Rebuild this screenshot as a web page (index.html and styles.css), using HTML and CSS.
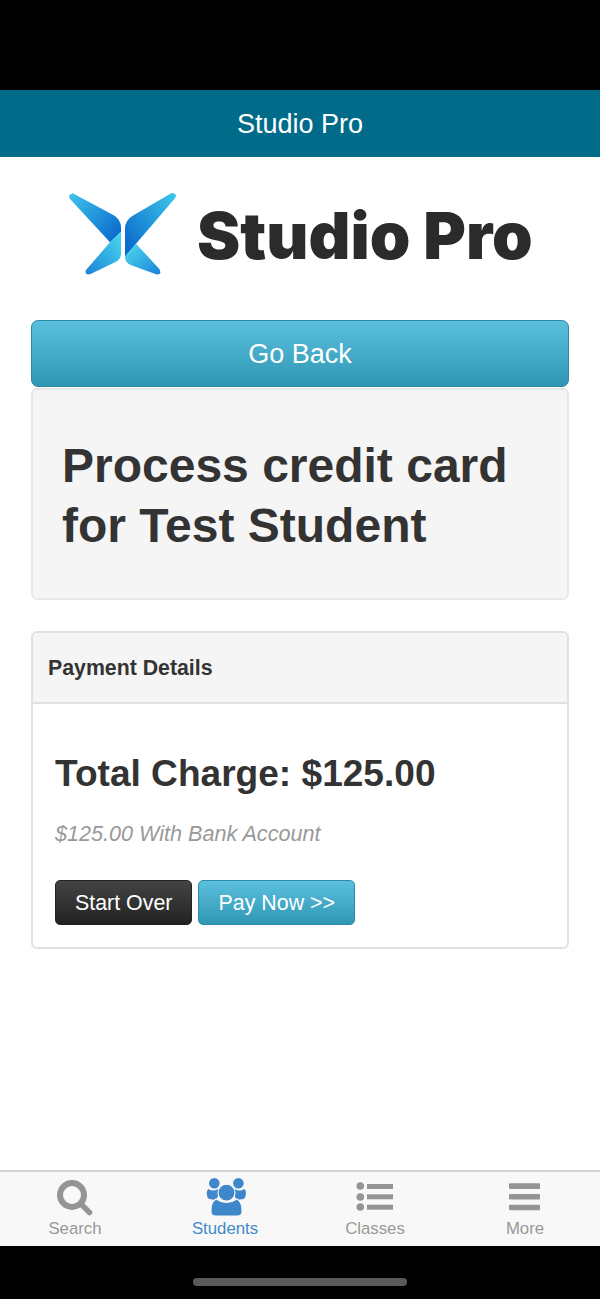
FILE: index.html
```html
<!DOCTYPE html>
<html lang="en">
<head>
    <meta charset="UTF-8">
    <meta name="viewport" content="width=device-width, initial-scale=1.0">
    <title>Studio Pro</title>
    <link rel="stylesheet" href="styles.css">
</head>
<body>
    <div class="status-bar"></div>
    <div class="nav-bar">Studio Pro</div>

    <div class="content">
        <div class="logo">
            <svg class="logo-mark" viewBox="0 0 375 285" width="125" height="95">
                <defs>
                    <linearGradient id="wingTopLeft" x1="0" y1="0" x2="1" y2="0.8">
                        <stop offset="0" stop-color="#3fc4ea"/>
                        <stop offset="1" stop-color="#0b6bcd"/>
                    </linearGradient>
                    <linearGradient id="wingTopRight" x1="1" y1="0" x2="0" y2="0.8">
                        <stop offset="0" stop-color="#3fc8ea"/>
                        <stop offset="1" stop-color="#0b6bcd"/>
                    </linearGradient>
                    <linearGradient id="wingLowLeft" x1="1" y1="0" x2="0" y2="1">
                        <stop offset="0" stop-color="#4ad8ef"/>
                        <stop offset="1" stop-color="#1a82d8"/>
                    </linearGradient>
                    <linearGradient id="wingLowRight" x1="0" y1="0" x2="1" y2="1">
                        <stop offset="0" stop-color="#52dcf0"/>
                        <stop offset="1" stop-color="#1a82d8"/>
                    </linearGradient>
                </defs>
                <path fill="url(#wingTopLeft)" d="M38 25 L160 90 Q183 103 183 128 L183 140 L150 172 L30 42 Q22 30 38 25 Z"/>
                <path fill="url(#wingLowLeft)" d="M183 140 L183 205 Q183 224 165 232 L92 267 Q72 272 78 255 L150 172 Z"/>
                <path fill="url(#wingTopRight)" d="M335 24 L218 92 Q196 105 195 130 L195 215 L228 176 L345 40 Q354 26 335 24 Z"/>
                <path fill="url(#wingLowRight)" d="M228 176 L298 252 Q307 270 288 268 L212 240 Q195 232 195 215 Z"/>
            </svg>
            <span class="logo-text">Studio Pro</span>
        </div>

        <button class="btn btn-info btn-block" type="button">Go Back</button>

        <div class="well">
            <h1>Process credit card<br>for Test Student</h1>
        </div>

        <div class="panel">
            <div class="panel-heading">Payment Details</div>
            <div class="panel-body">
                <h2>Total Charge: $125.00</h2>
                <p class="muted">$125.00 With Bank Account</p>
                <div class="actions">
                    <button class="btn btn-dark" type="button">Start Over</button>
                    <button class="btn btn-info" type="button">Pay Now &gt;&gt;</button>
                </div>
            </div>
        </div>
    </div>

    <div class="tab-bar">
        <div class="tab">
            <svg class="tab-icon" viewBox="0 0 40 39" width="40" height="39">
                <circle cx="17" cy="15" r="12" fill="none" stroke="#949494" stroke-width="6"/>
                <path d="M26 24 L34.500 32.500" stroke="#949494" stroke-width="5.500" stroke-linecap="round"/>
            </svg>
            <span>Search</span>
        </div>
        <div class="tab active">
            <svg class="tab-icon" viewBox="0 0 40 39" width="40" height="39">
                <circle cx="9.300" cy="3.300" r="5.300" fill="#3f87cb"/>
                <circle cx="33.400" cy="3.300" r="5.300" fill="#3f87cb"/>
                <path fill="#3f87cb" d="M3.500 9 Q8 12 13 9 L15 12 L11 20 L4 19 Q1.700 17 1.700 13 Q1.700 10 3.500 9 Z"/>
                <path fill="#3f87cb" d="M39.200 9 Q34.700 12 29.700 9 L27.700 12 L31.700 20 L38.700 19 Q41 17 41 13 Q41 10 39.200 9 Z"/>
                <path fill="#3f87cb" stroke="#f8f8f8" stroke-width="1.200" d="M11 19 Q21.500 26 32 19 Q37 22 37 29 L37 32 Q37 36 32.500 36 L10.500 36 Q6 36 6 32 L6 29 Q6 22 11 19 Z"/>
                <circle cx="21.500" cy="12.700" r="8.500" fill="#3f87cb" stroke="#f8f8f8" stroke-width="1.200"/>
            </svg>
            <span>Students</span>
        </div>
        <div class="tab">
            <svg class="tab-icon" viewBox="0 0 40 39" width="40" height="39">
                <circle cx="5.300" cy="6" r="3.800" fill="#949494"/>
                <circle cx="5.300" cy="17" r="3.800" fill="#949494"/>
                <circle cx="5.300" cy="27" r="3.800" fill="#949494"/>
                <rect x="12" y="4" width="26" height="5" fill="#949494"/>
                <rect x="12" y="14.300" width="26" height="5" fill="#949494"/>
                <rect x="12" y="24.700" width="26" height="5" fill="#949494"/>
            </svg>
            <span>Classes</span>
        </div>
        <div class="tab">
            <svg class="tab-icon" viewBox="0 0 40 39" width="40" height="39">
                <rect x="4" y="3.300" width="31" height="5.700" rx="1" fill="#949494"/>
                <rect x="4" y="14" width="31" height="5.500" rx="1" fill="#949494"/>
                <rect x="4" y="24.700" width="31" height="5.500" rx="1" fill="#949494"/>
            </svg>
            <span>More</span>
        </div>
    </div>
    <div class="home-bar"><div class="home-indicator"></div></div>
</body>
</html>
```

FILE: styles.css
```css
body {
    font-family: "Liberation Sans", Arial, sans-serif;
    margin: 0;
    height: 1299px;
    display: flex;
    flex-direction: column;
    background-color: #fff;
    color: #333;
    overflow: hidden;
}
.status-bar {
    height: 90px;
    background: #000;
}
.nav-bar {
    height: 67px;
    line-height: 68px;
    text-align: center;
    background: #006c8a;
    color: #fff;
    font-size: 27px;
}
.content {
    flex: 1;
    padding: 0 31px;
}
.logo {
    height: 163px;
    display: flex;
    align-items: center;
    padding-left: 29px;
}
.logo-mark {
    flex: none;
    margin-top: -13px;
}
.logo-text {
    font-family: Inter, sans-serif;
    font-weight: 900;
    font-size: 65px;
    font-optical-sizing: none;
    color: #2b2b2b;
    margin-left: 12px;
    margin-top: -6px;
    white-space: nowrap;
}
.btn {
    display: inline-block;
    font-family: inherit;
    font-size: 21.4px;
    height: 45px;
    padding: 2px 19px 0;
    color: #fff;
    border-radius: 5px;
}
.btn-info {
    background: linear-gradient(to bottom, #5bc0de, #2f96b4);
    border: 1px solid #2f8aa6;
}
.btn-dark {
    background: linear-gradient(to bottom, #444, #222);
    border: 1px solid #222;
}
.btn-block {
    display: block;
    width: 100%;
    height: 67px;
    font-size: 27px;
    border-radius: 7px;
    margin-bottom: 1px;
}
.well {
    height: 212px;
    box-sizing: border-box;
    background: #f5f5f5;
    border: 2px solid #e8e8e8;
    border-radius: 6px;
    padding: 46px 29px 0;
}
h1 {
    margin: 0;
    font-size: 48px;
    line-height: 60px;
    font-weight: bold;
}
.panel {
    margin-top: 31px;
    height: 318px;
    box-sizing: border-box;
    border: 2px solid #e0e0e0;
    border-radius: 6px;
}
.panel-heading {
    height: 71px;
    line-height: 71px;
    box-sizing: border-box;
    background: #f5f5f5;
    border-bottom: 2px solid #e0e0e0;
    padding-left: 15px;
    font-size: 21.3px;
    font-weight: bold;
    border-radius: 4px 4px 0 0;
}
.panel-body {
    padding: 47px 22px 0;
}
h2 {
    margin: 0;
    font-size: 37.1px;
    line-height: 44px;
    font-weight: bold;
}
.muted {
    margin: 25px 0 0;
    font-size: 21.6px;
    line-height: 28px;
    font-style: italic;
    color: #999;
}
.actions {
    margin-top: 32px;
    display: flex;
    gap: 6px;
}
.tab-bar {
    height: 76px;
    box-sizing: border-box;
    display: grid;
    grid-template-columns: repeat(4, 1fr);
    background: #f8f8f8;
    border-top: 2px solid #d4d4d4;
}
.tab {
    display: flex;
    flex-direction: column;
    align-items: center;
    color: #999;
    font-size: 16.8px;
}
.tab-icon {
    display: block;
    margin-top: 8px;
    overflow: visible;
}
.tab.active {
    color: #428bca;
}
.home-bar {
    height: 53px;
    background: #000;
    display: flex;
    justify-content: center;
    padding-top: 32px;
    box-sizing: border-box;
}
.home-indicator {
    width: 214px;
    height: 8px;
    border-radius: 4px;
    background: #5a5a5a;
}
```
